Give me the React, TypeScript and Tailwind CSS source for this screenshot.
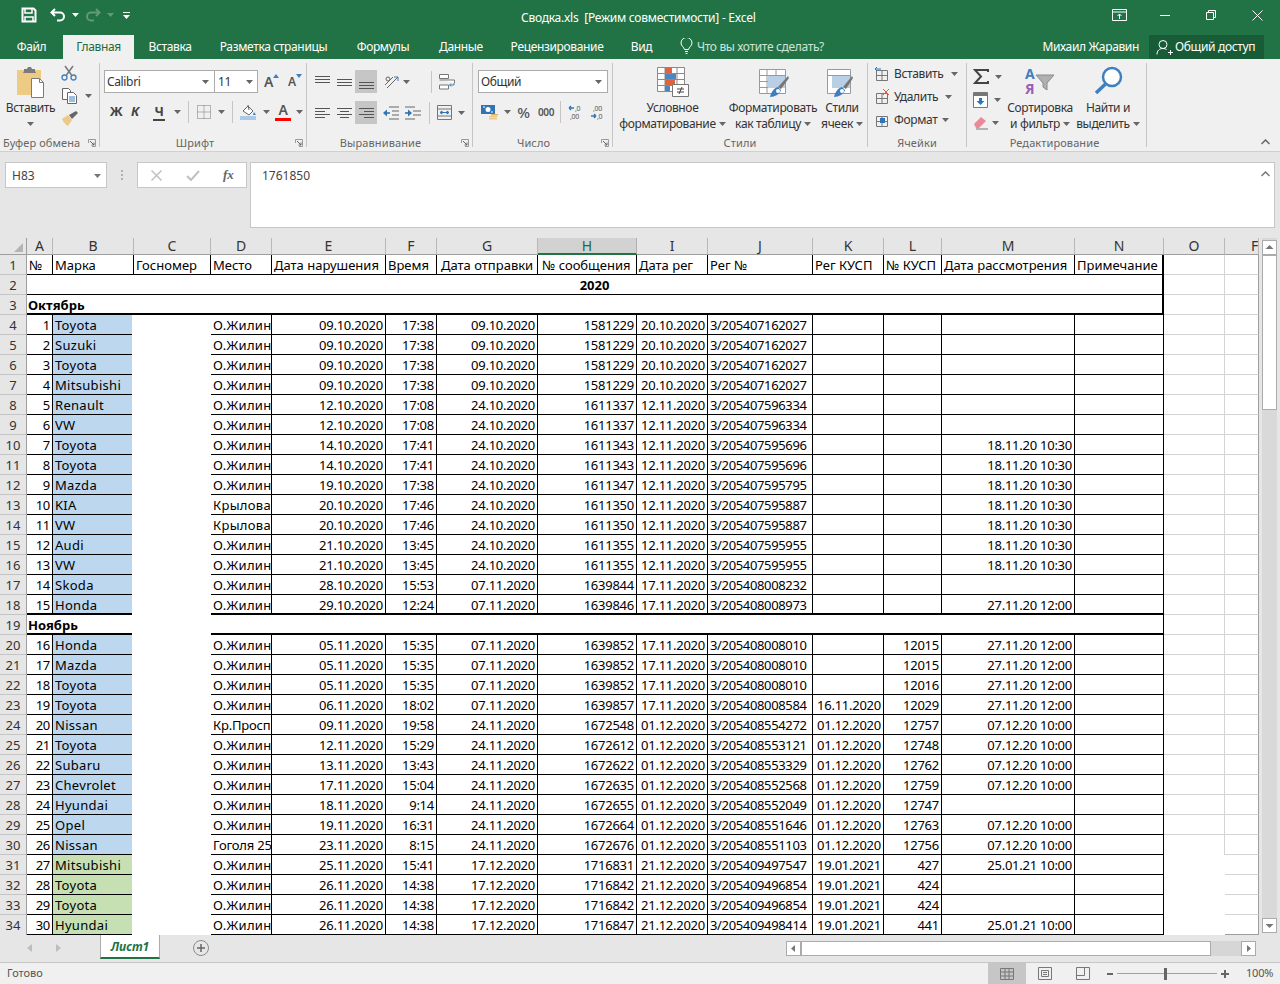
import type { ReactNode } from 'react';

const COLS = 'grid grid-cols-[27px_26px_81px_77px_61px_114px_51px_101px_99px_71px_105px_71px_58px_133px_89px_61px_34px]';
const ROW = `${COLS} grid-rows-[20px] h-[20px] text-[13px] leading-[21px] text-black`;
const LETTERS = ['A', 'B', 'C', 'D', 'E', 'F', 'G', 'H', 'I', 'J', 'K', 'L', 'M', 'N', 'O', 'F'];
const TITLES = ['№', 'Марка', 'Госномер', 'Место', 'Дата нарушения', 'Время', 'Дата отправки', '№ сообщения', 'Дата рег', 'Рег №', 'Рег КУСП', '№ КУСП', 'Дата рассмотрения', 'Примечание'];

type Row = { no: number; car: string; place?: string; a: string; t: string; b: string; msg: string; c: string; reg: string; k?: string; l?: string; m?: string };

const OCTOBER: Row[] = [
  { no: 1, car: 'Toyota', a: '09.10.2020', t: '17:38', b: '09.10.2020', msg: '1581229', c: '20.10.2020', reg: '3/205407162027' },
  { no: 2, car: 'Suzuki', a: '09.10.2020', t: '17:38', b: '09.10.2020', msg: '1581229', c: '20.10.2020', reg: '3/205407162027' },
  { no: 3, car: 'Toyota', a: '09.10.2020', t: '17:38', b: '09.10.2020', msg: '1581229', c: '20.10.2020', reg: '3/205407162027' },
  { no: 4, car: 'Mitsubishi', a: '09.10.2020', t: '17:38', b: '09.10.2020', msg: '1581229', c: '20.10.2020', reg: '3/205407162027' },
  { no: 5, car: 'Renault', a: '12.10.2020', t: '17:08', b: '24.10.2020', msg: '1611337', c: '12.11.2020', reg: '3/205407596334' },
  { no: 6, car: 'VW', a: '12.10.2020', t: '17:08', b: '24.10.2020', msg: '1611337', c: '12.11.2020', reg: '3/205407596334' },
  { no: 7, car: 'Toyota', a: '14.10.2020', t: '17:41', b: '24.10.2020', msg: '1611343', c: '12.11.2020', reg: '3/205407595696', m: '18.11.20 10:30' },
  { no: 8, car: 'Toyota', a: '14.10.2020', t: '17:41', b: '24.10.2020', msg: '1611343', c: '12.11.2020', reg: '3/205407595696', m: '18.11.20 10:30' },
  { no: 9, car: 'Mazda', a: '19.10.2020', t: '17:38', b: '24.10.2020', msg: '1611347', c: '12.11.2020', reg: '3/205407595795', m: '18.11.20 10:30' },
  { no: 10, car: 'KIA', place: 'Крылова', a: '20.10.2020', t: '17:46', b: '24.10.2020', msg: '1611350', c: '12.11.2020', reg: '3/205407595887', m: '18.11.20 10:30' },
  { no: 11, car: 'VW', place: 'Крылова', a: '20.10.2020', t: '17:46', b: '24.10.2020', msg: '1611350', c: '12.11.2020', reg: '3/205407595887', m: '18.11.20 10:30' },
  { no: 12, car: 'Audi', a: '21.10.2020', t: '13:45', b: '24.10.2020', msg: '1611355', c: '12.11.2020', reg: '3/205407595955', m: '18.11.20 10:30' },
  { no: 13, car: 'VW', a: '21.10.2020', t: '13:45', b: '24.10.2020', msg: '1611355', c: '12.11.2020', reg: '3/205407595955', m: '18.11.20 10:30' },
  { no: 14, car: 'Skoda', a: '28.10.2020', t: '15:53', b: '07.11.2020', msg: '1639844', c: '17.11.2020', reg: '3/205408008232' },
  { no: 15, car: 'Honda', a: '29.10.2020', t: '12:24', b: '07.11.2020', msg: '1639846', c: '17.11.2020', reg: '3/205408008973', m: '27.11.20 12:00' },
];

const NOVEMBER: Row[] = [
  { no: 16, car: 'Honda', a: '05.11.2020', t: '15:35', b: '07.11.2020', msg: '1639852', c: '17.11.2020', reg: '3/205408008010', l: '12015', m: '27.11.20 12:00' },
  { no: 17, car: 'Mazda', a: '05.11.2020', t: '15:35', b: '07.11.2020', msg: '1639852', c: '17.11.2020', reg: '3/205408008010', l: '12015', m: '27.11.20 12:00' },
  { no: 18, car: 'Toyota', a: '05.11.2020', t: '15:35', b: '07.11.2020', msg: '1639852', c: '17.11.2020', reg: '3/205408008010', l: '12016', m: '27.11.20 12:00' },
  { no: 19, car: 'Toyota', a: '06.11.2020', t: '18:02', b: '07.11.2020', msg: '1639857', c: '17.11.2020', reg: '3/205408008584', k: '16.11.2020', l: '12029', m: '27.11.20 12:00' },
  { no: 20, car: 'Nissan', place: 'Кр.Просп', a: '09.11.2020', t: '19:58', b: '24.11.2020', msg: '1672548', c: '01.12.2020', reg: '3/205408554272', k: '01.12.2020', l: '12757', m: '07.12.20 10:00' },
  { no: 21, car: 'Toyota', a: '12.11.2020', t: '15:29', b: '24.11.2020', msg: '1672612', c: '01.12.2020', reg: '3/205408553121', k: '01.12.2020', l: '12748', m: '07.12.20 10:00' },
  { no: 22, car: 'Subaru', a: '13.11.2020', t: '13:43', b: '24.11.2020', msg: '1672622', c: '01.12.2020', reg: '3/205408553329', k: '01.12.2020', l: '12762', m: '07.12.20 10:00' },
  { no: 23, car: 'Chevrolet', a: '17.11.2020', t: '15:04', b: '24.11.2020', msg: '1672635', c: '01.12.2020', reg: '3/205408552568', k: '01.12.2020', l: '12759', m: '07.12.20 10:00' },
  { no: 24, car: 'Hyundai', a: '18.11.2020', t: '9:14', b: '24.11.2020', msg: '1672655', c: '01.12.2020', reg: '3/205408552049', k: '01.12.2020', l: '12747' },
  { no: 25, car: 'Opel', a: '19.11.2020', t: '16:31', b: '24.11.2020', msg: '1672664', c: '01.12.2020', reg: '3/205408551646', k: '01.12.2020', l: '12763', m: '07.12.20 10:00' },
  { no: 26, car: 'Nissan', place: 'Гоголя 25', a: '23.11.2020', t: '8:15', b: '24.11.2020', msg: '1672676', c: '01.12.2020', reg: '3/205408551103', k: '01.12.2020', l: '12756', m: '07.12.20 10:00' },
  { no: 27, car: 'Mitsubishi', a: '25.11.2020', t: '15:41', b: '17.12.2020', msg: '1716831', c: '21.12.2020', reg: '3/205409497547', k: '19.01.2021', l: '427', m: '25.01.21 10:00' },
  { no: 28, car: 'Toyota', a: '26.11.2020', t: '14:38', b: '17.12.2020', msg: '1716842', c: '21.12.2020', reg: '3/205409496854', k: '19.01.2021', l: '424' },
  { no: 29, car: 'Toyota', a: '26.11.2020', t: '14:38', b: '17.12.2020', msg: '1716842', c: '21.12.2020', reg: '3/205409496854', k: '19.01.2021', l: '424' },
  { no: 30, car: 'Hyundai', a: '26.11.2020', t: '14:38', b: '17.12.2020', msg: '1716847', c: '21.12.2020', reg: '3/205409498414', k: '19.01.2021', l: '441', m: '25.01.21 10:00' },
];

const TABS = [
  { label: 'Файл', w: 'w-[63px]' },
  { label: 'Главная', w: 'w-[71px]', active: true },
  { label: 'Вставка', w: 'w-[72px]' },
  { label: 'Разметка страницы', w: 'w-[135px]' },
  { label: 'Формулы', w: 'w-[84px]' },
  { label: 'Данные', w: 'w-[72px]' },
  { label: 'Рецензирование', w: 'w-[120px]' },
  { label: 'Вид', w: 'w-[49px]' },
];

function Caret({ fill = '#666666' }: { fill?: string }) {
  return (
    <svg width="7" height="4" viewBox="0 0 7 4" className="shrink-0">
      <path d="M0 0h7L3.500 4z" fill={fill} />
    </svg>
  );
}

function Launcher() {
  return (
    <svg width="8" height="8" viewBox="0 0 8 8" className="absolute right-[3px] top-[76px]">
      <path d="M.5 4V.5H7.500V7.500H4" fill="none" stroke="#9a9a9a" />
      <path d="M2 2l4 4M6 3.500V6H3.500" fill="none" stroke="#666666" />
    </svg>
  );
}

function Group({ w, label, children, launcher, labelClass = 'text-center' }: { w: string; label: string; children: ReactNode; launcher?: boolean; labelClass?: string }) {
  return (
    <div className={`relative h-[84px] shrink-0 border-r border-[#c6c6c6] ${w}`}>
      <div className="flow-root h-[72px]">{children}</div>
      <div className={`h-[16px] text-[11px] leading-[16px] tracking-[0.1px] text-[#666666] ${labelClass}`}>{label}</div>
      {launcher && <Launcher />}
    </div>
  );
}

function Lines({ rows, width = 15, height = 16 }: { rows: [number, number, number][]; width?: number; height?: number }) {
  return (
    <svg width={width} height={height} viewBox={`0 0 ${width} ${height}`} className="shrink-0">
      {rows.map(([x, y, w]) => (
        <rect key={`${x}-${y}`} x={x} y={y} width={w} height="1" fill="#555555" />
      ))}
    </svg>
  );
}

function SmallGrid({ children }: { children?: ReactNode }) {
  return (
    <svg width="16" height="15" viewBox="0 0 16 15" className="shrink-0">
      <path d="M2.500 4.500h11v10h-11zM2.500 9.500h11M8 4.500v10" fill="none" stroke="#777777" />
      {children}
    </svg>
  );
}

function HeadRow() {
  return (
    <div className={`${COLS} grid-rows-[17px] h-[17px] bg-[#e6e6e6] text-[14px] leading-[16px] text-[#333333]`}>
      <div className="flex items-end justify-end border-r border-b border-[#9e9e9e] pb-[2px] pr-[3px]">
        <svg width="9" height="9" viewBox="0 0 9 9"><path d="M9 0v9H0z" fill="#b4b4b4" /></svg>
      </div>
      {LETTERS.map((letter, i) => (
        <div
          key={`${letter}-${i}`}
          className={
            letter === 'H'
              ? 'border-r border-b-2 border-r-[#b0b0b0] border-b-[#217346] bg-[#d2d2d2] text-center text-[#1e6b41]'
              : `border-r border-b border-r-[#b8b8b8] border-b-[#9e9e9e] ${i === 15 ? 'overflow-hidden pl-[26px]' : 'text-center'}`
          }
        >
          {letter}
        </div>
      ))}
    </div>
  );
}

const num = 'overflow-hidden whitespace-nowrap border-r border-b border-black px-[2px] text-right tracking-[-0.25px]';
const txt = 'overflow-hidden whitespace-nowrap border-r border-b border-black px-[2px]';

function RowHead({ n, last }: { n: number; last?: boolean }) {
  return (
    <div className={`border-r bg-[#e6e6e6] text-center text-[#333333] ${last ? 'border-[#9e9e9e]' : 'border-b border-r-[#9e9e9e] border-b-[#c4c4c4]'}`}>{n}</div>
  );
}

function Tail({ hideO, hideORight, last }: { hideO?: boolean; hideORight?: boolean; last?: boolean }) {
  return (
    <>
      <div className={`${hideO ? '' : 'border-b'} ${hideORight ? '' : 'border-r'} border-[#d4d4d4]`} />
      <div className={`border-r border-b border-r-[#9e9e9e] ${last ? 'border-b-[#9e9e9e]' : 'border-b-[#d4d4d4]'}`} />
    </>
  );
}

function DataRow({ sheetRow, row, fill, thick, last }: { sheetRow: number; row: Row; fill: string; thick?: boolean; last?: boolean }) {
  const edge = thick ? 'border-b-2' : '';
  return (
    <div className={ROW}>
      <RowHead n={sheetRow} last={last} />
      <div className={`${num} ${edge}`}>{row.no}</div>
      <div className={`mr-[2px] overflow-hidden whitespace-nowrap border-b border-black px-[2px] tracking-[0.3px] ${fill} ${edge}`}>{row.car}</div>
      <div />
      <div className={`${txt} ${row.place && row.place.length > 7 ? 'tracking-[-0.2px]' : 'tracking-[0.3px]'} ${edge}`}>{row.place ?? 'О.Жилин'}</div>
      <div className={`${num} ${edge}`}>{row.a}</div>
      <div className={`${num} ${edge}`}>{row.t}</div>
      <div className={`${num} ${edge}`}>{row.b}</div>
      <div className={`${num} ${edge}`}>{row.msg}</div>
      <div className={`${num} ${edge}`}>{row.c}</div>
      <div className={`${txt} tracking-[-0.35px] ${edge}`}>{row.reg}</div>
      <div className={`${num} ${edge}`}>{row.k}</div>
      <div className={`${num} ${edge}`}>{row.l}</div>
      <div className={`${num} tracking-[-0.3px] ${edge}`}>{row.m}</div>
      <div className={`${txt} ${edge}`} />
      <Tail hideO={row.no >= 26} hideORight={row.no >= 27} last={last} />
    </div>
  );
}

function Sheet() {
  return (
    <div className="w-[1259px] shrink-0 bg-white">
      <HeadRow />
      <div className={ROW}>
        <RowHead n={1} />
        {TITLES.map((title, i) => (
          <div key={title} className={`${txt} ${i === 13 ? 'border-r-2' : ''} ${i === 6 || i === 7 ? 'pl-[4px]' : ''}`}>{title}</div>
        ))}
        <Tail />
      </div>
      <div className={ROW}>
        <RowHead n={2} />
        <div className="col-span-14 border-r-2 border-b border-black text-center font-bold">2020</div>
        <Tail />
      </div>
      <div className={ROW}>
        <RowHead n={3} />
        <div className="col-span-14 border-r-2 border-b-2 border-black px-[1px] font-bold">Октябрь</div>
        <Tail />
      </div>
      {OCTOBER.map((row, i) => (
        <DataRow key={row.no} sheetRow={i + 4} row={row} fill="bg-[#bdd7ee]" thick={row.no === 15} />
      ))}
      <div className={ROW}>
        <RowHead n={19} />
        <div className="col-span-2 mr-[2px] border-b-2 border-black px-[1px] font-bold">Ноябрь</div>
        <div />
        <div className="col-span-11 border-r border-b-2 border-black" />
        <Tail />
      </div>
      {NOVEMBER.map((row, i) => (
        <DataRow
          key={row.no}
          sheetRow={i + 20}
          row={row}
          fill={row.no >= 27 ? 'bg-[#c6e0b4]' : 'bg-[#bdd7ee]'}
          last={row.no === 30}
        />
      ))}
    </div>
  );
}

function ScrollButton({ d }: { d: string }) {
  return (
    <div className="flex h-[15px] w-[15px] shrink-0 items-center justify-center border border-[#ababab] bg-white">
      <svg width="9" height="9" viewBox="0 0 9 9"><path d={d} fill="#777777" /></svg>
    </div>
  );
}

function TitleBar() {
  return (
    <div className="relative flex h-[35px] items-start bg-[#217346] text-white">
      <svg width="16" height="16" viewBox="0 0 16 16" className="ml-[21px] mt-[7px]">
        <path d="M1.500 1.500h11l2 2v11h-13z" fill="none" stroke="#fff" strokeWidth="2" />
        <path d="M4 1v5h7V1M4 15v-5h8v5" fill="none" stroke="#fff" strokeWidth="1.500" />
      </svg>
      <svg width="16" height="14" viewBox="0 0 16 14" className="ml-[13px] mt-[8px]">
        <path d="M5 1L1.500 4.500 5 8M2 4.500h8a4 4 0 0 1 0 8H7" fill="none" stroke="#fff" strokeWidth="2" />
      </svg>
      <div className="ml-[6px] mt-[13px]"><Caret fill="#ffffff" /></div>
      <svg width="16" height="14" viewBox="0 0 16 14" className="ml-[6px] mt-[8px]">
        <path d="M11 1l3.500 3.500L11 8M14 4.500H6a4 4 0 0 0 0 8h3" fill="none" stroke="#5f9a7a" strokeWidth="2" />
      </svg>
      <div className="ml-[6px] mt-[13px]"><Caret fill="#5f9a7a" /></div>
      <svg width="7" height="8" viewBox="0 0 7 8" className="ml-[9px] mt-[12px]">
        <path d="M0 0h7v1H0zM0 3h7L3.500 7z" fill="#fff" />
      </svg>
      <div className="absolute left-[521px] top-[9px] whitespace-pre text-[12px] leading-[17px] tracking-[-0.25px] text-white">Сводка.xls  [Режим совместимости] - Excel</div>
      <svg width="15" height="12" viewBox="0 0 15 12" className="absolute left-[1112px] top-[9px]">
        <path d="M.5.500h14v11H.5zM.5 3h14M7.500 10V5M5.500 7l2-2 2 2" fill="none" stroke="#fff" />
      </svg>
      <div className="absolute left-[1160px] top-[15px] h-[1px] w-[10px] bg-white" />
      <svg width="10" height="10" viewBox="0 0 10 10" className="absolute left-[1206px] top-[10px]">
        <path d="M.5 2.500h7v7h-7zM2.500 2.500v-2h7v7h-2" fill="none" stroke="#fff" />
      </svg>
      <svg width="11" height="11" viewBox="0 0 11 11" className="absolute left-[1252px] top-[10px]">
        <path d="M.5.500l10 10M10.500.500l-10 10" fill="none" stroke="#fff" />
      </svg>
    </div>
  );
}

function TabBar() {
  return (
    <div className="flex h-[24px] items-stretch bg-[#217346] text-[12px] leading-[24px] tracking-[-0.35px] text-white">
      {TABS.map((tab) => (
        <div key={tab.label} className={`${tab.w} shrink-0 text-center ${tab.active ? 'bg-[#f0f0f0] text-[#1e6b41]' : ''}`}>{tab.label}</div>
      ))}
      <svg width="13" height="16" viewBox="0 0 13 16" className="ml-[14px] mt-[3px] shrink-0">
        <path d="M4.500 11.500C4 9 1 8 1 5a5.500 5.500 0 0 1 11 0c0 3-3 4-3.500 6.500zM5 13.500h3M5.500 15.500h2" fill="none" stroke="#fff" />
      </svg>
      <div className="ml-[4px] text-[#cfe3d8]">Что вы хотите сделать?</div>
      <div className="ml-auto mr-[10px]">Михаил Жаравин</div>
      <div className="mr-[16px] flex w-[115px] items-center gap-[2px] bg-[#185c37] pl-[7px]">
        <svg width="17" height="17" viewBox="0 0 17 17" className="shrink-0">
          <circle cx="7" cy="5.500" r="4" fill="none" stroke="#fff" />
          <path d="M1 15.500c0-4 2.500-6 6-6 1.500 0 2.500.3 3.500 1M12 13.500h5M14.500 11v5" fill="none" stroke="#fff" />
        </svg>
        <span>Общий доступ</span>
      </div>
    </div>
  );
}

function Clipboard() {
  return (
    <Group w="w-[100px]" label="Буфер обмена" launcher labelClass="pl-[3px] text-left">
      <div className="flex">
        <div className="flex w-[61px] flex-col items-center pt-[3px] text-[12px] leading-[16px] text-[#333333]">
          <svg width="32" height="32" viewBox="0 0 32 32">
            <path d="M2 4h24v25H2z" fill="#eecb85" />
            <path d="M9 5V3h3l1-2h3l1 2h3v2l1 2H8z" fill="#7b7b7b" />
            <path d="M16.500 12.500h8l4 4v15h-12z" fill="#fff" stroke="#7b7b7b" />
            <path d="M24.500 12.500v4h4" fill="none" stroke="#7b7b7b" />
          </svg>
          <div className="mt-[2px]">Вставить</div>
          <div className="mt-[6px]"><Caret /></div>
        </div>
        <div className="flex flex-col pt-[2px]">
          <svg width="16" height="16" viewBox="0 0 16 16">
            <path d="M4 1l6.500 9M12 1L5.500 10" fill="none" stroke="#777777" strokeWidth="1.500" />
            <circle cx="3.500" cy="12.500" r="2.500" fill="none" stroke="#3f7fbf" strokeWidth="1.300" />
            <circle cx="12.500" cy="12.500" r="2.500" fill="none" stroke="#3f7fbf" strokeWidth="1.300" />
          </svg>
          <div className="mt-[7px] flex items-center gap-[7px]">
            <svg width="17" height="16" viewBox="0 0 17 16">
              <path d="M1.500.500h6l2 2v9h-8z" fill="#fff" stroke="#666666" />
              <path d="M6.500 4.500h6l3 3v8h-9z" fill="#fff" stroke="#666666" />
              <path d="M8 9h6M8 11h6M8 13h6" stroke="#3f7fbf" />
            </svg>
            <Caret />
          </div>
          <svg width="18" height="16" viewBox="0 0 18 16" className="mt-[7px]">
            <path d="M1 8l6-4 4 5-4 6c-2-1-5-4-6-7z" fill="#edc987" />
            <path d="M8 4l3 4 6-6-2-2z" fill="#666666" />
          </svg>
        </div>
      </div>
    </Group>
  );
}

function Font() {
  return (
    <Group w="w-[207px]" label="Шрифт" launcher labelClass="pr-[16px] text-center">
      <div className="flex items-center pl-[4px] pt-[7px]">
        <div className="flex h-[23px] w-[111px] items-center justify-between border border-[#ababab] bg-white pl-[2px] pr-[5px] text-[12px] text-[#333333]">
          Calibri<Caret />
        </div>
        <div className="flex h-[23px] w-[43px] items-center justify-between border border-l-0 border-[#ababab] bg-white pl-[3px] pr-[4px] text-[12px] text-[#333333]">
          11<Caret />
        </div>
        <div className="ml-[6px] flex items-start text-[14px] font-semibold leading-[20px] text-[#555555]">
          A<svg width="6" height="4" viewBox="0 0 6 4" className="mt-[2px]"><path d="M0 4h6L3 0z" fill="#3f7fbf" /></svg>
        </div>
        <div className="ml-[9px] flex items-start text-[12px] font-semibold leading-[20px] text-[#555555]">
          A<svg width="6" height="4" viewBox="0 0 6 4" className="mt-[2px]"><path d="M0 0h6L3 4z" fill="#3f7fbf" /></svg>
        </div>
      </div>
      <div className="mt-[7px] flex h-[24px] items-center pl-[9px]">
        <span className="w-[14px] text-center text-[13px] font-bold text-[#444444]">Ж</span>
        <span className="ml-[6px] w-[12px] text-center text-[13px] font-bold italic text-[#444444]">К</span>
        <span className="ml-[12px] w-[12px] border-b-2 border-[#444444] text-center text-[13px] font-bold leading-[15px] text-[#444444]">Ч</span>
        <div className="ml-[9px]"><Caret /></div>
        <div className="ml-[7px] h-[22px] w-[1px] bg-[#c6c6c6]" />
        <svg width="14" height="14" viewBox="0 0 14 14" className="ml-[8px]">
          <path d="M.5.500h13v13H.5zM.5 7h13M7 .5v13" fill="none" stroke="#777777" strokeDasharray="1 1" />
        </svg>
        <div className="ml-[7px]"><Caret /></div>
        <div className="ml-[7px] h-[22px] w-[1px] bg-[#c6c6c6]" />
        <svg width="17" height="16" viewBox="0 0 17 16" className="ml-[7px]">
          <path d="M3 7l5-5 5 5-4 4z" fill="#fff" stroke="#666666" />
          <path d="M8 1l1 5" stroke="#666666" />
          <path d="M14 8l2 3h-3z" fill="#3f7fbf" />
          <path d="M0 12h16v4H0z" fill="#a9c9e8" />
        </svg>
        <div className="ml-[6px]"><Caret /></div>
        <div className="ml-[5px] flex w-[16px] flex-col items-center text-[14px] font-semibold leading-[14px] text-[#555555]">
          A<div className="mt-[1px] h-[3px] w-[16px] bg-[#ff0000]" />
        </div>
        <div className="ml-[5px]"><Caret /></div>
      </div>
    </Group>
  );
}

function Alignment() {
  const sel = 'flex h-[23px] w-[22px] items-center justify-center bg-[#c6c6c6]';
  return (
    <Group w="w-[166px]" label="Выравнивание" launcher labelClass="pr-[18px] text-center">
      <div className="flex h-[30px] items-end pl-[8px]">
        <div className="flex h-[23px] items-center">
          <Lines rows={[[0, 2, 15], [0, 5, 15], [0, 8, 15]]} />
          <div className="ml-[7px]"><Lines rows={[[0, 5, 15], [0, 8, 15], [0, 11, 15]]} /></div>
          <div className={`ml-[3px] ${sel}`}><Lines rows={[[0, 8, 15], [0, 11, 15], [0, 14, 15]]} /></div>
          <svg width="15" height="15" viewBox="0 0 15 15" className="ml-[7px]">
            <path d="M1 11L9 3M3 14L14 3" stroke="#666666" fill="none" />
            <path d="M14 3v4M14 3h-4" stroke="#3f7fbf" fill="none" />
            <circle cx="4" cy="5" r="2" fill="none" stroke="#666666" />
          </svg>
          <div className="ml-[4px]"><Caret /></div>
          <div className="ml-[21px] h-[22px] w-[1px] bg-[#c6c6c6]" />
          <svg width="16" height="16" viewBox="0 0 16 16" className="ml-[7px]">
            <path d="M.5.500h9v4h-9zM.5 6h15v3M.5 11h9v4h-9z" fill="#fff" stroke="#777777" />
            <path d="M15 9v2h-4M12 9.500L10.500 11l1.500 1.500" fill="none" stroke="#3f7fbf" />
          </svg>
        </div>
      </div>
      <div className="mt-[8px] flex h-[23px] items-center pl-[8px]">
        <Lines rows={[[0, 3, 15], [0, 6, 10], [0, 9, 15], [0, 12, 10]]} />
        <div className="ml-[7px]"><Lines rows={[[0, 3, 15], [3, 6, 9], [0, 9, 15], [3, 12, 9]]} /></div>
        <div className={`ml-[3px] ${sel}`}><Lines rows={[[0, 3, 15], [5, 6, 10], [0, 9, 15], [5, 12, 10]]} /></div>
        <svg width="16" height="14" viewBox="0 0 16 14" className="ml-[6px]">
          <path d="M6 1h10M9 5h7M9 9h7M6 13h10" stroke="#666666" fill="none" />
          <path d="M0 7l4-3.500v7z" fill="#2f75b5" /><path d="M3 6.200h4v1.600H3z" fill="#2f75b5" />
        </svg>
        <svg width="16" height="14" viewBox="0 0 16 14" className="ml-[6px]">
          <path d="M0 1h10M8 5h8M8 9h8M0 13h10" stroke="#666666" fill="none" />
          <path d="M7 7L3 3.500v7z" fill="#2f75b5" /><path d="M0 6.200h4v1.600H0z" fill="#2f75b5" />
        </svg>
        <div className="ml-[8px] h-[22px] w-[1px] bg-[#c6c6c6]" />
        <svg width="15" height="15" viewBox="0 0 15 15" className="ml-[7px]">
          <path d="M.5.500h14v14H.5zM.5 4h14M.5 11h14" fill="none" stroke="#777777" />
          <path d="M3 7.500h9M3 7.500l2-1.500v3zM12 7.500L10 6v3z" stroke="#2f75b5" fill="#2f75b5" />
        </svg>
        <div className="ml-[6px]"><Caret /></div>
      </div>
    </Group>
  );
}

function NumberGroup() {
  return (
    <Group w="w-[140px]" label="Число" launcher labelClass="pr-[18px] text-center">
      <div className="pl-[5px] pt-[7px]">
        <div className="flex h-[23px] w-[130px] items-center justify-between border border-[#ababab] bg-white pl-[2px] pr-[5px] text-[12px] text-[#333333]">
          Общий<Caret />
        </div>
      </div>
      <div className="mt-[7px] flex h-[24px] items-center pl-[8px]">
        <svg width="17" height="17" viewBox="0 0 17 17">
          <path d="M0 1h14v9H0z" fill="#2f75b5" />
          <circle cx="7" cy="5.500" r="2.500" fill="#fff" />
          <path d="M2 3h2M10 8h2" stroke="#fff" />
          <path d="M8 12h8v1.500H8zM8 14h8v1.500H8z" fill="#edc987" />
          <path d="M10 10h7v1.500h-7z" fill="#e0b45f" />
        </svg>
        <div className="ml-[6px]"><Caret /></div>
        <span className="ml-[6px] w-[13px] text-center text-[15px] font-medium text-[#555555]">%</span>
        <span className="ml-[8px] w-[16px] text-center text-[10px] font-semibold text-[#555555]">000</span>
        <div className="ml-[6px] h-[22px] w-[1px] bg-[#c6c6c6]" />
        <svg width="16" height="16" viewBox="0 0 16 16" className="ml-[7px]">
          <path d="M6 4H1M1 4l2-2M1 4l2 2" fill="none" stroke="#2f75b5" strokeWidth="1.300" />
          <text x="7" y="7" fontSize="7" fill="#555555">,0</text>
          <text x="2" y="15" fontSize="7" fill="#555555">,00</text>
        </svg>
        <svg width="16" height="16" viewBox="0 0 16 16" className="ml-[6px]">
          <text x="3" y="7" fontSize="7" fill="#555555">,00</text>
          <path d="M1 12h5M6 12l-2-2M6 12l-2 2" fill="none" stroke="#2f75b5" strokeWidth="1.300" />
          <text x="7" y="15" fontSize="7" fill="#555555">,0</text>
        </svg>
      </div>
    </Group>
  );
}

function BigLabel({ top, bottom, w, ml = '' }: { top: string; bottom: string; w: string; ml?: string }) {
  return (
    <div className={`text-center text-[12px] leading-[16px] text-[#333333] ${w} ${ml}`}>
      <div className="whitespace-nowrap">{top}</div>
      <div className="flex items-center justify-center gap-[3px] whitespace-nowrap">{bottom}<Caret /></div>
    </div>
  );
}

function Styles() {
  return (
    <Group w="w-[255px]" label="Стили">
      <div className="flex h-[37px] items-start pt-[4px]">
        <svg width="32" height="30" viewBox="0 0 32 30" className="ml-[44px]">
          <path d="M.5.500h27v24H.5zM.5 6.500h27M.5 12.500h27M.5 18.500h27M8 .5v24M20 .5v24" fill="#fff" stroke="#8a8a8a" />
          <path d="M8 1h7v5H8zM8 13h10v5H8z" fill="#e0633e" />
          <path d="M8 7h11v5H8zM8 19h5v5H8z" fill="#4a86c0" />
          <path d="M15.500 17.500h16v12h-16z" fill="#fff" stroke="#777777" />
          <path d="M20 22h7M20 25h7M25 20l-3 7" stroke="#444444" fill="none" />
        </svg>
        <svg width="31" height="30" viewBox="0 0 31 30" className="ml-[70px] mt-[1px]">
          <path d="M.5 1.500h26v24H.5zM.5 7.500h26M.5 13.500h26M.5 19.500h26M8 1.500v24M17 1.500v24" fill="#fff" stroke="#9a9a9a" />
          <path d="M9 8h17v12H9z" fill="#b9cfe6" />
          <path d="M29 8L19 19l3 2L30 10z" fill="#777777" />
          <path d="M11 29c1-5 4-9 8-10l3 3c-1 4-6 7-11 7z" fill="#3f7fbf" />
          <circle cx="19" cy="23" r="2" fill="#fff" />
        </svg>
        <svg width="26" height="30" viewBox="0 0 26 30" className="ml-[37px] mt-[1px]">
          <path d="M.5 1.500h23v24H.5zM.5 7.500h23" fill="#fff" stroke="#9a9a9a" />
          <path d="M5 8h18v12H5z" fill="#b9cfe6" />
          <path d="M25 8L16 19l3 2L26 10z" fill="#777777" />
          <path d="M7 29c1-5 4-9 8-10l3 3c-1 4-6 7-11 7z" fill="#3f7fbf" />
          <circle cx="15" cy="23" r="2" fill="#fff" />
        </svg>
      </div>
      <div className="flex">
        <BigLabel top="Условное" bottom="форматирование" w="w-[109px]" ml="ml-[5px]" />
        <BigLabel top="Форматировать" bottom="как таблицу" w="w-[92px]" />
        <BigLabel top="Стили" bottom="ячеек" w="w-[46px]" />
      </div>
    </Group>
  );
}

function Cells() {
  const row = 'flex h-[23px] items-center text-[12px] text-[#333333]';
  return (
    <Group w="w-[99px]" label="Ячейки">
      <div className="-mt-[1px] pl-[6px]">
        <div className={row}>
          <SmallGrid><path d="M1 3h6M1 3l2-2M1 3l2 2" stroke="#2f75b5" fill="none" /></SmallGrid>
          <span className="ml-[4px]">Вставить</span>
          <div className="ml-[7px]"><Caret /></div>
        </div>
        <div className={row}>
          <SmallGrid><path d="M9 0l6 6M15 0L9 6" stroke="#e0633e" fill="none" /></SmallGrid>
          <span className="ml-[4px]">Удалить</span>
          <div className="ml-[7px]"><Caret /></div>
        </div>
        <div className={row}>
          <SmallGrid><path d="M6 6h5v5H6z" fill="#2f75b5" /></SmallGrid>
          <span className="ml-[4px]">Формат</span>
          <div className="ml-[5px]"><Caret /></div>
        </div>
      </div>
    </Group>
  );
}

function Editing() {
  return (
    <Group w="w-[180px]" label="Редактирование" labelClass="pr-[4px] text-center">
      <div className="flex">
        <div className="flex w-[39px] flex-col pl-[6px] pt-[2px]">
          <div className="flex h-[23px] items-center gap-[6px]">
            <svg width="16" height="15" viewBox="0 0 16 15"><path d="M15 3V1H2l6 6.500L2 14h13v-2" fill="none" stroke="#444444" strokeWidth="2" /></svg>
            <Caret />
          </div>
          <div className="flex h-[23px] items-center gap-[6px]">
            <svg width="15" height="16" viewBox="0 0 15 16">
              <path d="M.5.500h14v15H.5z" fill="#fff" stroke="#777777" />
              <path d="M1 1h13v3H1z" fill="#777777" />
              <path d="M7.500 13L3.500 9H6V6h3v3h2.500z" fill="#2f75b5" />
            </svg>
            <Caret />
          </div>
          <div className="flex h-[23px] items-center gap-[4px]">
            <svg width="15" height="15" viewBox="0 0 15 15">
              <path d="M1 9l7-7 5 4-7 7H3z" fill="#e98a96" />
              <path d="M3 14h12" stroke="#777777" />
            </svg>
            <Caret />
          </div>
        </div>
        <div className="flex w-[68px] flex-col items-center pt-[2px]">
          <svg width="32" height="32" viewBox="0 0 32 32">
            <text x="1" y="14" fontSize="14" fontWeight="700" fill="#3f7fbf">A</text>
            <text x="1" y="29" fontSize="14" fontWeight="700" fill="#9a5cb4">Я</text>
            <path d="M12 10h18l-7 8v7l-4-3v-4z" fill="#b0b0b0" stroke="#8a8a8a" />
          </svg>
          <div className="mt-[3px] whitespace-nowrap text-center text-[12px] leading-[16px] text-[#333333]">
            <div>Сортировка</div>
            <div className="flex items-center justify-center gap-[3px]">и фильтр<Caret /></div>
          </div>
        </div>
        <div className="flex w-[68px] flex-col items-center pt-[2px]">
          <svg width="32" height="32" viewBox="0 0 32 32">
            <circle cx="20" cy="12" r="9" fill="#fff" stroke="#3f7fbf" strokeWidth="2.500" />
            <path d="M13.500 19L4 28" stroke="#3f7fbf" strokeWidth="3.500" />
          </svg>
          <div className="mt-[3px] whitespace-nowrap text-center text-[12px] leading-[16px] text-[#333333]">
            <div>Найти и</div>
            <div className="flex items-center justify-center gap-[3px]">выделить<Caret /></div>
          </div>
        </div>
      </div>
    </Group>
  );
}

function Ribbon() {
  return (
    <div className="relative flex h-[93px] border-b border-[#d0d0d0] bg-[#f0f0f0] pt-[4px] tracking-[-0.35px]">
      <Clipboard />
      <Font />
      <Alignment />
      <NumberGroup />
      <Styles />
      <Cells />
      <Editing />
      <svg width="9" height="6" viewBox="0 0 9 6" className="absolute left-[1261px] top-[80px]">
        <path d="M.5 5l4-4 4 4" fill="none" stroke="#666666" strokeWidth="1.500" />
      </svg>
    </div>
  );
}

function FormulaBar() {
  return (
    <div className="flex h-[86px] items-start bg-[#e6e6e6] pt-[10px] text-[12px] text-[#444444]">
      <div className="ml-[5px] flex h-[26px] w-[102px] items-center justify-between border border-[#c6c6c6] bg-white pl-[6px] pr-[5px] pt-[1px]">
        H83<Caret fill="#777777" />
      </div>
      <div className="flex h-[26px] w-[30px] flex-col items-center justify-center gap-[2px]">
        <div className="h-[2px] w-[2px] bg-[#b0b0b0]" />
        <div className="h-[2px] w-[2px] bg-[#b0b0b0]" />
        <div className="h-[2px] w-[2px] bg-[#b0b0b0]" />
      </div>
      <div className="flex h-[26px] w-[110px] items-center border border-[#c6c6c6] bg-white">
        <svg width="11" height="11" viewBox="0 0 11 11" className="ml-[13px]"><path d="M.5.500l10 10M10.500.500l-10 10" stroke="#c0c0c0" strokeWidth="1.500" /></svg>
        <svg width="14" height="11" viewBox="0 0 14 11" className="ml-[24px]"><path d="M1 6l4 4 8-9" fill="none" stroke="#c0c0c0" strokeWidth="2" /></svg>
        <span className="ml-[23px] font-['Liberation_Serif'] text-[13px] font-bold italic text-[#666666]">fx</span>
      </div>
      <div className="relative ml-[3px] h-[66px] w-[1025px] border border-[#c6c6c6] bg-white pl-[11px] pt-[4px] text-[12px] leading-[18px]">
        1761850
        <svg width="9" height="6" viewBox="0 0 9 6" className="absolute right-[4px] top-[8px]">
          <path d="M.5 5l4-4 4 4" fill="none" stroke="#777777" strokeWidth="1.500" />
        </svg>
      </div>
    </div>
  );
}

function SheetTabs() {
  return (
    <div className="flex h-[27px] items-start bg-[#e6e6e6]">
      <svg width="5" height="8" viewBox="0 0 5 8" className="ml-[27px] mt-[9px]"><path d="M5 0v8L0 4z" fill="#bdbdbd" /></svg>
      <svg width="5" height="8" viewBox="0 0 5 8" className="ml-[24px] mt-[9px]"><path d="M0 0v8l5-4z" fill="#bdbdbd" /></svg>
      <div className="ml-[39px] h-[24px] w-[60px] border-x border-b-2 border-x-[#ababab] border-b-[#217346] bg-white text-center text-[12px] font-bold italic leading-[24px] text-[#217346]">Лист1</div>
      <svg width="16" height="16" viewBox="0 0 16 16" className="ml-[33px] mt-[5px]">
        <circle cx="8" cy="8" r="7.500" fill="none" stroke="#8a8a8a" />
        <path d="M4 8h8M8 4v8" stroke="#666666" strokeWidth="1.500" />
      </svg>
      <div className="ml-[577px] mt-[6px] flex h-[15px] w-[470px] bg-[#d6d6d6]">
        <ScrollButton d="M6 1v7L2 4.500z" />
        <div className="h-[15px] w-[410px] border border-[#ababab] bg-white" />
        <div className="ml-auto"><ScrollButton d="M3 1v7l4-3.500z" /></div>
      </div>
    </div>
  );
}

function StatusBar() {
  return (
    <div className="flex h-[22px] items-stretch border-t border-[#c6c6c6] bg-[#f0f0f0] text-[11px] leading-[20px] text-[#555555]">
      <div className="ml-[7px] w-[981px]">Готово</div>
      <div className="flex w-[38px] items-center justify-center bg-[#c6c6c6]">
        <svg width="14" height="12" viewBox="0 0 14 12"><path d="M.5.500h13v11H.5zM.5 4h13M.5 8h13M5 .5v11M9 .5v11" fill="none" stroke="#777777" /></svg>
      </div>
      <svg width="14" height="13" viewBox="0 0 14 13" className="ml-[12px] mt-[4px]"><path d="M.5.500h13v12H.5zM3.500 3.500h7v6h-7zM5 5.500h4M5 7.500h4" fill="none" stroke="#777777" /></svg>
      <svg width="14" height="13" viewBox="0 0 14 13" className="ml-[24px] mt-[4px]"><path d="M.5.500h13v12H.5zM.5 8.500h8V.5" fill="none" stroke="#777777" /></svg>
      <div className="ml-[17px] mt-[10px] h-[2px] w-[6px] bg-[#666666]" />
      <div className="relative ml-[4px] mt-[10px] h-[1px] w-[100px] bg-[#a0a0a0]">
        <div className="absolute left-[47px] top-[-5px] h-[12px] w-[3px] bg-[#666666]" />
      </div>
      <svg width="8" height="8" viewBox="0 0 8 8" className="ml-[4px] mt-[7px]"><path d="M0 4h8M4 0v8" stroke="#666666" strokeWidth="2" /></svg>
      <div className="ml-[17px] tracking-[-0.2px]">100%</div>
    </div>
  );
}

export default function App() {
  return (
    <div className="h-[984px] w-[1280px] overflow-hidden bg-[#e6e6e6] font-['Noto_Sans',sans-serif]">
      <TitleBar />
      <TabBar />
      <Ribbon />
      <FormulaBar />
      <div className="flex h-[697px]">
        <Sheet />
        <div className="ml-[3px] flex h-[695px] w-[15px] shrink-0 flex-col bg-[#d9d9d9] pt-[2px]">
          <ScrollButton d="M4.500 2l4 4h-8z" />
          <div className="h-[155px] border border-[#ababab] bg-white" />
          <div className="mt-auto"><ScrollButton d="M4.500 7l4-4h-8z" /></div>
        </div>
      </div>
      <SheetTabs />
      <StatusBar />
    </div>
  );
}
